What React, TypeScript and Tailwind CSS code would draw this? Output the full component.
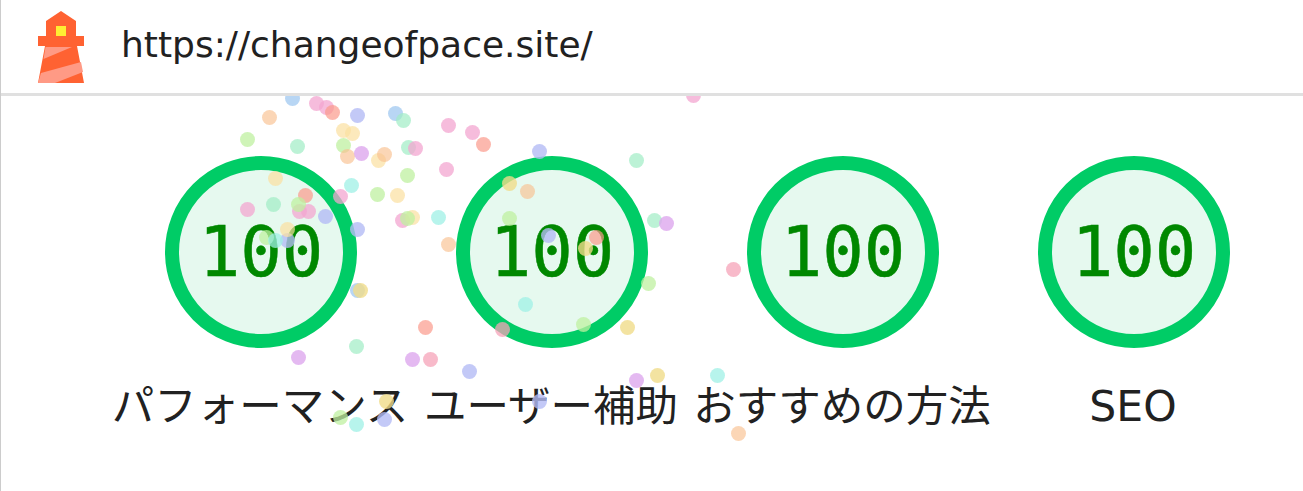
import React from 'react';

const pink = 'bg-[#f3a6d0]/75';
const rose = 'bg-[#f5a3b8]/75';
const salmon = 'bg-[#fb9a8c]/70';
const orange = 'bg-[#f9c08f]/65';
const cream = 'bg-[#fbdfa0]/70';
const yellow = 'bg-[#f0dc8a]/80';
const green = 'bg-[#bff0a0]/75';
const mint = 'bg-[#9fecc4]/70';
const aqua = 'bg-[#9ff0e6]/75';
const blue = 'bg-[#a0c8f0]/75';
const peri = 'bg-[#b4bcf5]/80';
const purple = 'bg-[#dda8ee]/80';

const DOTS: [number, number, string][] = [
  [292, 98, blue], [316, 103, pink], [326, 107, pink], [332, 112, salmon], [357, 115, peri],
  [395, 113, blue], [403, 120, mint], [269, 117, orange], [247, 139, green], [297, 146, mint],
  [343, 130, cream], [352, 133, cream], [343, 145, green], [347, 156, orange], [361, 153, purple],
  [378, 160, cream], [384, 154, orange], [351, 185, aqua], [377, 194, green], [397, 195, cream],
  [402, 220, pink], [340, 196, pink], [275, 178, cream], [305, 195, salmon], [273, 204, mint],
  [247, 209, pink], [299, 211, pink], [308, 211, pink], [298, 204, green], [325, 216, peri],
  [357, 229, peri], [287, 240, peri], [287, 229, cream], [266, 237, green], [275, 240, aqua],
  [357, 290, blue], [360, 290, yellow], [356, 346, mint], [298, 357, purple], [425, 327, salmon],
  [412, 359, purple], [430, 359, rose], [340, 417, green], [356, 424, aqua], [386, 401, yellow],
  [384, 419, peri], [448, 125, pink], [472, 132, pink], [483, 144, salmon], [539, 151, peri],
  [636, 160, mint], [693, 95, pink], [408, 147, mint], [415, 148, pink], [446, 169, pink],
  [407, 175, green], [509, 183, yellow], [527, 191, orange], [509, 218, green], [438, 217, aqua],
  [412, 217, cream], [407, 218, green], [448, 244, orange], [548, 235, peri], [585, 248, yellow],
  [596, 237, salmon], [654, 220, mint], [666, 223, purple], [733, 269, rose], [648, 283, green],
  [525, 304, aqua], [502, 329, rose], [583, 324, green], [627, 327, yellow], [469, 371, peri],
  [636, 380, purple], [657, 375, yellow], [717, 375, aqua], [539, 401, peri], [738, 433, orange],
];

const CATEGORIES = ['パフォーマンス', 'ユーザー補助', 'おすすめの方法', 'SEO'];

const Logo = () => (
  <svg width="46" height="72" viewBox="38 11 46 72" className="shrink-0">
    <path d="M61 11 L76 21 V36 H84 V46 H77 L84 83 H38 L45 46 H38 V36 H46 V21 Z" fill="#ff6232" />
    <path d="M45.5 47 H72 L43.5 59 Z" fill="#ff9a85" />
    <path d="M81 62 L83 72 L55 83 H38 L41 73 Z" fill="#ff9a85" />
    <rect x="56" y="26" width="10" height="10" fill="#ffee33" />
  </svg>
);

const Gauge = ({ label }: { label: string }) => (
  <div className="w-[291px] flex flex-col items-center">
    <div className="w-[192px] h-[192px] rounded-full border-[14px] border-[#00cc66] bg-[#e6f9ef] flex items-center justify-center">
      <span className="font-['DejaVu_Sans_Mono',monospace] text-[69px] leading-none text-[#008800] [-webkit-text-stroke:0.5px_#008800]">100</span>
    </div>
    <div className="mt-[29px] mr-[2px] whitespace-nowrap text-[42.5px] leading-[60px] text-[#212121]">{label}</div>
  </div>
);

export default function App() {
  return (
    <div className="relative w-[1303px] h-[491px] overflow-hidden bg-white border-l border-[#cccccc] font-['DejaVu_Sans','Noto_Sans_CJK_JP',sans-serif]">
      <main className="flex pl-[114.5px] pt-[156px]">
        {CATEGORIES.map((c) => (
          <Gauge key={c} label={c} />
        ))}
      </main>

      {/* confetti */}
      {DOTS.map(([x, y, color], i) => (
        <span
          key={i}
          className={`absolute w-[15px] h-[15px] rounded-full ${color}`}
          style={{ left: x - 8.5, top: y - 7.5 }}
        />
      ))}

      <header className="absolute inset-x-0 top-0 h-[96px] bg-white border-b-[3px] border-[#e0e0e0] flex items-center pl-[37px] gap-[37px]">
        <Logo />
        <span className="mb-[3px] text-[36px] leading-none text-[#212121] whitespace-nowrap">https://changeofpace.site/</span>
      </header>
    </div>
  );
}
